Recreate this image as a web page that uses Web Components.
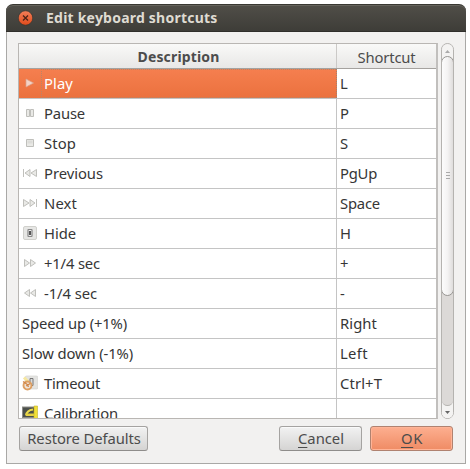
<!DOCTYPE html>
<html lang="en"><head><meta charset="utf-8"><title>Edit keyboard shortcuts</title>
<style>
html,body{margin:0;background:#fff}
body{width:470px;height:469px;overflow:hidden;font:14.8px/20px "Noto Sans","Open Sans",sans-serif;color:#363636}
</style></head><body>
<shortcuts-dialog></shortcuts-dialog>
<script>
const define=(name,html,setup)=>customElements.define(name,class extends HTMLElement{
  connectedCallback(){
    if(this.shadowRoot)return;
    this.attachShadow({mode:'open'}).innerHTML=html;
    if(setup)setup(this,this.shadowRoot);
  }
});

// A label whose tracking is adjusted so that its text is `w` pixels wide.
define('fit-label',`<style>:host{display:inline-block;white-space:pre}span{display:inline-block}u{text-decoration-thickness:1px;text-underline-offset:3px}</style><span></span>`,(el,root)=>{
  const s=root.querySelector('span'),t=el.getAttribute('text'),w=+el.getAttribute('w');
  if(el.hasAttribute('key')){const u=document.createElement('u');u.textContent=t[0];s.append(u,t.slice(1));}
  else s.textContent=t;
  const n=s.getBoundingClientRect().width;
  if(w&&n){s.style.letterSpacing=((w-n)/t.length)+'px';}
});

const svg=b=>`<svg width="16" height="16" viewBox="0 0 16 16">${b}</svg>`;
const g='fill="#e9e9e6" stroke="#b9b9b4" stroke-width=".9"';
const icons={
 play:svg('<path d="M4 4 11.500 8l-7.500 4z" fill="#f4d3c6" stroke="#d9a590" stroke-width=".7"/>'),
 pause:svg(`<path d="M4.500 4.500h3v7h-3zM8.500 4.500h3v7h-3z" ${g}/>`),
 stop:svg(`<path d="M4.500 4.500h7v7h-7z" ${g}/><path d="M5.500 5.500h5v3h-5z" fill="#dcdcd9"/>`),
 prev:svg(`<path d="M1.500 4v8M8 4.500v7L3 8zM14.500 4.500v7L9 8z" ${g}/>`),
 next:svg(`<path d="M14.500 4v8M8 4.500v7L13 8zM1.500 4.500v7L7 8z" ${g}/>`.replace('M8 4.500v7L13 8z','M8 4.500v7l5-3.500z')),
 hide:svg('<rect x="1.500" y="1.500" width="13" height="13" rx="1.500" fill="#e6e6e4" stroke="#d0d0cc"/><rect x="6" y="4.500" width="4" height="7" rx=".5" fill="#eee" stroke="#888" stroke-width="1.200"/><path d="M7 6h2v4H7z" fill="#555"/>'),
 fwd:svg(`<path d="M2.500 4.500v7L7.500 8zM8.500 4.500v7l5-3.500z" ${g}/>`),
 back:svg(`<path d="M7.500 4.500v7L2.500 8zM13.500 4.500v7l-5-3.500z" ${g}/>`),
 timeout:svg('<rect x="3" y="1" width="13" height="13" rx="1.500" fill="#e3e3e1" stroke="#d5d5d2" stroke-width=".7"/><path d="M8 3.500h3v7H8z" fill="#ddd" stroke="#777"/><path d="M2 2.500l4 4" stroke="#f6e7a0" stroke-width="3"/><circle cx="5.500" cy="10.500" r="4" fill="#eee5dc" stroke="#dd9f63" stroke-width="1.900"/><path d="M1 6.500l5 3.500 2-1.500M4 10.500l3 1" stroke="#d08445" stroke-width="1.100" fill="none"/>'),
 calib:svg('<rect x=".5" y="2" width="12" height="10.500" fill="#4b4f4b" stroke="#8b8b85"/><path d="M4 10.500C4.500 7 7 5 11 4.500" stroke="#eddc4c" stroke-width="2" fill="none"/><path d="M4 8.500h8V11H4z" fill="#e5d142"/><path d="M12 1h3.500v14H12z" fill="#f1df37" stroke="#c3b12c" stroke-width=".6"/><path d="M2 14.500h10" stroke="#99988c" stroke-width="2"/>')
};

define('title-bar',`<style>
:host{display:flex;align-items:center;height:28px;box-sizing:border-box;padding-left:12px;gap:12px;border-radius:7px 7px 0 0;background:linear-gradient(#504e48,#3e3d38);border-top:1px solid #393832;border-bottom:1px solid #302f2b;box-shadow:inset 0 1px #65635c;color:#dfdbd2;font-weight:bold;font-size:14px}
svg{display:block;flex:none}</style>
<svg width="16" height="16" viewBox="0 0 16 16"><defs><linearGradient id="r" x2="0" y2="1"><stop stop-color="#f37f59"/><stop offset="1" stop-color="#e04b1b"/></linearGradient></defs><circle cx="7.500" cy="8" r="7.200" fill="url(#r)" stroke="#30302b" stroke-width=".6"/><path d="M5 5.500l5 5m0-5l-5 5" stroke="#4b2418" stroke-width="1.300"/></svg>
<fit-label text="Edit keyboard shortcuts" w="171.500"></fit-label>`);

define('table-header',`<style>
:host{display:grid;grid-template-columns:318px 1fr;height:25px;flex:none;box-sizing:border-box;background:linear-gradient(#f9f9f8,#e8e7e6);border-bottom:1px solid #a5a29f;color:#4c4c4c}
div{display:flex;align-items:center;justify-content:center;padding-top:1px}
.first{border-right:1px solid #cbc9c7;font-weight:bold;font-size:14px;padding-left:2px}</style>
<div class="first"><fit-label text="Description" w="82"></fit-label></div><div><fit-label text="Shortcut" w="58"></fit-label></div>`);

define('shortcut-row',`<style>
:host{display:grid;grid-template-columns:318px 1fr;height:30px;flex:none;box-sizing:border-box;border-bottom:1px solid #c4c4c4}
div{display:flex;align-items:center;min-width:0}
fit-label{padding-bottom:1px}
.d{border-right:1px solid #c4c4c4;padding-left:3px;box-sizing:border-box}
.s{padding-left:3px}
i{width:16px;height:16px;margin:0 6px 1px 0}i svg{display:block}
:host([selected]) .d{background:linear-gradient(#f57f4f,#eb713e);color:#fff;border-right:1px dotted #a18170;position:relative}
:host([selected]) .d::after{content:"";position:absolute;left:22px;right:0;top:0;bottom:0;border:1px dotted #b98468;border-right:0}
</style><div class="d"></div><div class="s"></div>`,(el,r)=>{
  const a=n=>el.getAttribute(n)||'';
  r.querySelector('.d').innerHTML=(a('icon')?`<i>${icons[a('icon')]}</i>`:'')+`<fit-label text="${a('name')}" w="${a('w')}"></fit-label>`;
  r.querySelector('.s').innerHTML=a('keys')?`<fit-label text="${a('keys')}" w="${a('kw')}"></fit-label>`:'';
});

define('shortcut-table',`<style>
:host{display:flex;flex-direction:column;width:420px;height:376px;box-sizing:border-box;overflow:hidden;background:#fff;border:1px solid #b9b6b3;border-right:2px solid #c1bfbd}
section{display:flex;flex-direction:column;flex:1;min-height:0;overflow:hidden}</style>
<table-header></table-header><section><slot></slot></section>`);

define('scroll-bar',`<style>
:host{display:block;width:13px;height:376px;box-sizing:border-box;border:1px solid #b5b3b0;border-radius:7px;overflow:hidden;background:#dcd9d7}
div{display:flex;flex-direction:column;height:100%}
svg{display:block}
.a,.z{height:12px;background:#f4f3f2;display:flex;align-items:center;justify-content:center;flex:none}
.a{padding-top:2px;box-sizing:border-box}
.t{height:240px;box-sizing:border-box;margin:0 -1px;border:1px solid #979592;border-radius:7px;background:linear-gradient(90deg,#fcfcfc,#f4f3f3 50%,#dfdddc);display:flex;align-items:center;justify-content:center}
.f{flex:1;background:#dcd9d7;border-radius:0 0 6px 6px;border-bottom:1px solid #b5b3b0}
.low{background:#f4f3f2;flex:1;display:flex;flex-direction:column}
.w{background:linear-gradient(#f4f3f2 50%,#dcd9d7 50%);flex:none}
</style><div><span class="a"><svg width="5" height="3"><path d="M0 3L2.500 0 5 3z" fill="#aaa"/></svg></span>
<span class="w"><span class="t"><svg width="4" height="8"><path d="M0 .5h4M0 3.500h4M0 6.500h4" stroke="#aaa"/></svg></span></span>
<span class="low"><span class="f"></span><span class="z"><svg width="5" height="3"><path d="M0 0h5L2.500 3z" fill="#666"/></svg></span></span></div>`);

define('push-button',`<style>
:host{display:flex;align-items:center;justify-content:center;height:25px;box-sizing:border-box;padding:0 0 2px 1px;border:1px solid #a5a3a1;border-bottom-color:#8f8d8b;border-radius:3px;background:linear-gradient(#f2f2f2,#d5d4d3);box-shadow:inset 0 1px #fafafa;color:#4c4c4c}
:host([primary]){background:linear-gradient(#fdaf90,#ef8b64);border-color:#b08270;box-shadow:inset 0 0 0 1px #ffb497}</style><slot></slot>`);

define('shortcuts-dialog',`<style>
:host{display:block;width:460px;height:460px;margin:4px 0 0 6px}
.body{height:432px;box-sizing:border-box;border:1px solid #a9a8a6;border-top:0;background:#f2f1f0;padding:11px 11px 0}
.view{display:flex;gap:3px}
footer{display:flex;gap:8px;margin:7px 0 0 1px}
</style><title-bar></title-bar><div class="body"><div class="view"><shortcut-table>
<shortcut-row selected icon="play" name="Play" w="29" keys="L" kw="7.500"></shortcut-row>
<shortcut-row icon="pause" name="Pause" w="41" keys="P" kw="9"></shortcut-row>
<shortcut-row icon="stop" name="Stop" w="32" keys="S" kw="8"></shortcut-row>
<shortcut-row icon="prev" name="Previous" w="59" keys="PgUp" kw="37"></shortcut-row>
<shortcut-row icon="next" name="Next" w="33" keys="Space" kw="40"></shortcut-row>
<shortcut-row icon="hide" name="Hide" w="32" keys="H" kw="11"></shortcut-row>
<shortcut-row icon="fwd" name="+1/4 sec" w="56" keys="+" kw="8"></shortcut-row>
<shortcut-row icon="back" name="-1/4 sec" w="53" keys="-" kw="5"></shortcut-row>
<shortcut-row name="Speed up (+1%)" w="105" keys="Right" kw="37"></shortcut-row>
<shortcut-row name="Slow down (-1%)" w="111" keys="Left" kw="28"></shortcut-row>
<shortcut-row icon="timeout" name="Timeout" w="56" keys="Ctrl+T" kw="42"></shortcut-row>
<shortcut-row icon="calib" name="Calibration" w="74"></shortcut-row>
</shortcut-table><scroll-bar></scroll-bar></div>
<footer><push-button style="width:129px"><fit-label text="Restore Defaults" w="113.500"></fit-label></push-button><push-button style="width:83px;margin-left:auto"><fit-label key text="Cancel" w="46"></fit-label></push-button><push-button primary style="width:83px;margin-right:1px"><fit-label key text="OK" w="22"></fit-label></push-button></footer></div>`);
</script></body></html>
